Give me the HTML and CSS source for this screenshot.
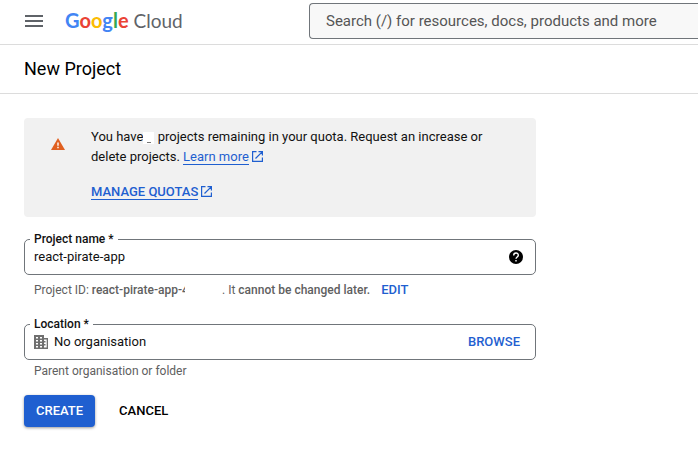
FILE: index.html
```html
<!DOCTYPE html>
<html lang="en-GB">
<head>
<meta charset="utf-8">
<meta name="viewport" content="width=device-width, initial-scale=1">
<title>New Project – Google Cloud</title>
<link rel="stylesheet" href="styles.css">
</head>
<body>
<header class="topbar">
  <button class="menu" type="button" aria-label="Navigation menu">
    <svg width="18" height="12" viewBox="0 0 18 12" aria-hidden="true"><path d="M0 0h18v2H0zM0 5h18v2H0zM0 10h18v2H0z" fill="#5f6368"/></svg>
  </button>
  <a class="logo" href="#"><span class="google"><span class="blue">G</span><span class="red">o</span><span class="yellow">o</span><span class="blue">g</span><span class="green">l</span><span class="red">e</span></span><span class="cloud">Cloud</span></a>
  <input class="search" type="search" aria-label="Search" placeholder="Search (/) for resources, docs, products and more">
</header>
<div class="titlebar"><h1>New Project</h1></div>
<main>
  <section class="notice">
    <svg class="warning" width="14" height="12" viewBox="0 0 14 12" aria-hidden="true"><path d="M7 0 14 12H0z" fill="#e06020"/><path d="M6.3 4.5h1.4v3.2H6.3zM6.3 8.8h1.4v1.4H6.3z" fill="#fff"/></svg>
    <div class="notice-body">
      <p>You have<span class="redacted"></span> projects remaining in your quota. Request an increase or delete projects. <a href="#">Learn more</a><svg class="external" width="11" height="11" viewBox="0 0 11 11" aria-hidden="true"><path d="M4.5.6H.6v9.8h9.8V6.5M6.5.6h3.9v3.9M10.2.8 3.5 7.5" fill="none" stroke="#1f5fd0" stroke-width="1.2"/></svg></p>
      <p class="manage"><a href="#">MANAGE QUOTAS</a><svg class="external" width="11" height="11" viewBox="0 0 11 11" aria-hidden="true"><path d="M4.5.6H.6v9.8h9.8V6.5M6.5.6h3.9v3.9M10.2.8 3.5 7.5" fill="none" stroke="#1f5fd0" stroke-width="1.2"/></svg></p>
    </div>
  </section>
  <form>
    <div class="field">
      <label for="name">Project name *</label>
      <input id="name" type="text" value="react-pirate-app">
      <button class="help" type="button" aria-label="Help">
        <svg width="14" height="14" viewBox="0 0 14 14" aria-hidden="true"><circle cx="7" cy="7" r="7" fill="#000"/><path d="M4.7 5.4C4.7 2.3 9.3 2.3 9.3 5.2 9.3 6.9 7 7 7 8.8" fill="none" stroke="#fff" stroke-width="1.4"/><path d="M6.3 10h1.4v1.4H6.3z" fill="#fff"/></svg>
      </button>
    </div>
    <p class="hint">Project ID: <b>react-pirate-app-</b><b class="cut">4</b><span class="hidden-id"></span>. It <b>cannot be changed later.</b><button class="link edit" type="button">EDIT</button></p>
    <div class="field">
      <label for="location">Location *</label>
      <svg class="building" width="14" height="14" viewBox="0 0 14 14" aria-hidden="true"><path fill-rule="evenodd" d="M0 0h10v3h4v11H0zM2 2v1.5h2V2zM6 2v1.5h2V2zM2 5v1.5h2V5zM6 5v1.5h2V5zM2 8v1.5h2V8zM6 8v1.5h2V8zM2 11v1.5h2V11zM6 11v1.5h2V11zM10 4.4v8.2h2.7V4.4z" fill="#707070"/><path d="M10 6h1.5v1.5H10zM10 9h1.5v1.5H10z" fill="#707070"/></svg>
      <input id="location" type="text" value="No organisation">
      <button class="link" type="button">BROWSE</button>
    </div>
    <p class="hint">Parent organisation or folder</p>
    <div class="actions">
      <button class="create" type="submit">CREATE</button>
      <button class="cancel" type="button">CANCEL</button>
    </div>
  </form>
</main>
</body>
</html>
```
FILE: styles.css
```css
* { box-sizing: border-box; }
body {
  margin: 0;
  background: #fff;
  color: #111;
  font: 13px/20px Roboto, sans-serif;
  overflow-x: hidden;
}
h1, p { margin: 0; }
button { border: 0; padding: 0; background: none; font: inherit; font-weight: 500; }
input { min-width: 0; font: inherit; color: inherit; }
svg { flex: none; }
a { color: #1f5fd0; text-decoration: none; }

.topbar {
  display: flex;
  align-items: center;
  height: 45px;
  padding: 0 0 2px 25px;
  border-bottom: 1px solid #dcdcdc;
}
.menu { display: flex; width: 40px; }
.logo {
  display: flex;
  align-items: baseline;
  gap: 5px;
  width: 244px;
  padding-bottom: 2px;
  font: 20px/24px Lato, sans-serif;
  flex: none;
}
.google { font-weight: 700; }
.blue { color: #4285f4; }
.red { color: #ea4335; }
.yellow { color: #fbbc04; }
.green { color: #34a853; }
.cloud { color: #5f6368; font-size: 19px; }
.search {
  flex: 1;
  height: 36px;
  padding: 0 16px;
  border: 1px solid #70757a;
  border-right: 0;
  border-radius: 4px 0 0 4px;
  background: #f8f8f8;
  font-size: 15px;
}
.search::placeholder { color: #555; opacity: 1; }

.titlebar { padding: 12px 24px; border-bottom: 1px solid #dcdcdc; }
h1 { font-size: 18px; line-height: 24px; font-weight: 400; color: #000; }

main { max-width: 560px; padding: 24px; }
.notice {
  display: flex;
  gap: 26px;
  padding: 9px 40px 15px 27px;
  border-radius: 4px;
  background: #f1f1f1;
}
.warning { margin-top: 11px; }
.notice a { border-bottom: 1px solid #1f5fd0; }
.external { margin-left: 3px; vertical-align: -1px; }
.manage { margin-top: 15px; font-weight: 500; }
.redacted {
  display: inline-block;
  width: 11px;
  height: 12px;
  vertical-align: -3px;
  background: linear-gradient(#777, #777) 4px 10px / 4px 1px no-repeat #fff;
}

.field {
  position: relative;
  display: flex;
  align-items: center;
  height: 36px;
  margin-top: 22px;
  padding: 0 15px 0 9px;
  border: 1px solid #70757a;
  border-radius: 5px;
}
.hint + .field { margin-top: 24px; }
.field label {
  position: absolute;
  top: -9px;
  left: 5px;
  padding: 0 4px;
  background: #fff;
  font-size: 12px;
  line-height: 16px;
  font-weight: 500;
}
.field input { flex: 1; padding: 0; border: 0; outline: 0; background: none; }
.help { display: flex; margin-right: -3px; }
.building { margin-right: 6px; }
.link { color: #1f5fd0; }
.hint {
  display: flex;
  margin-top: 5px;
  padding-left: 10px;
  color: #606060;
  font-size: 12px;
  line-height: 20px;
  white-space: pre;
}
.field:nth-of-type(2) + .hint { margin-top: 1px; }
.hint b { font-weight: 500; }
.cut { width: 3px; height: 14px; overflow: hidden; }
.hidden-id { width: 37px; }
.edit { margin-left: 11px; font-size: 13px; }
.actions { display: flex; gap: 24px; margin-top: 14px; }
.create {
  height: 32px;
  padding: 0 12px;
  border-radius: 4px;
  background: #1f5fd0;
  color: #fff;
  box-shadow: 0 1px 3px rgba(0, 0, 0, .4);
}
.cancel { color: #000; }
```
